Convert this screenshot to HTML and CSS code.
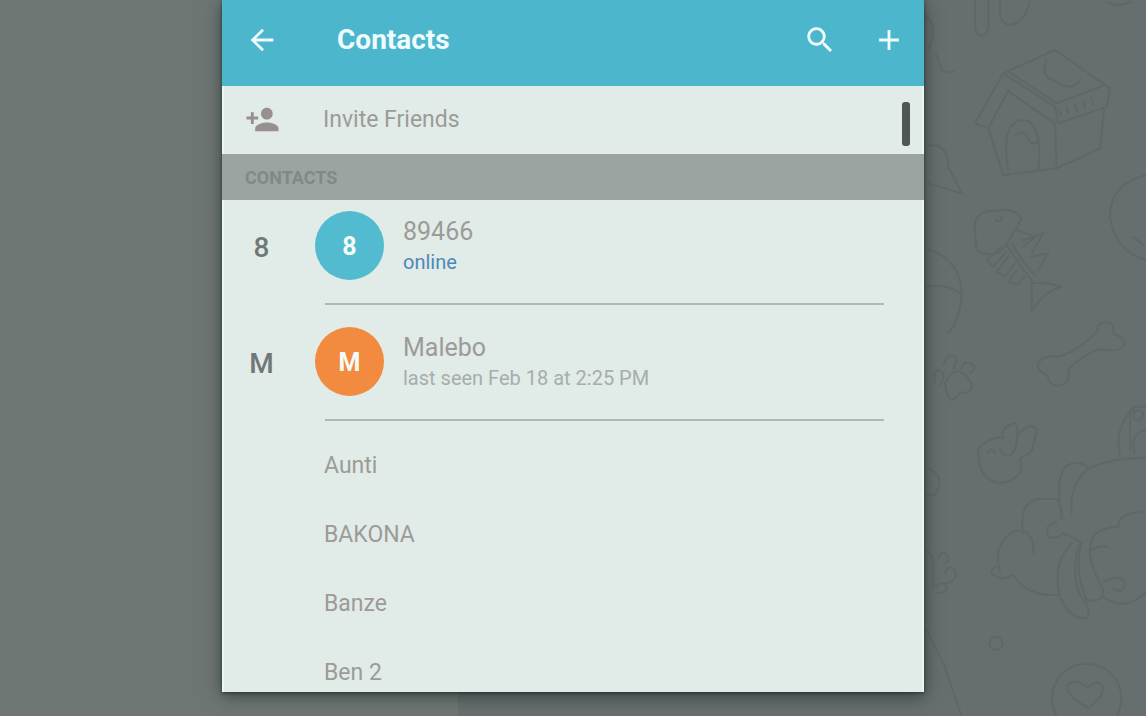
FILE: index.html
```html
<!DOCTYPE html>
<html lang="en">
<head>
    <meta charset="UTF-8">
    <meta name="viewport" content="width=device-width, initial-scale=1.0">
    <title>Contacts</title>
    <link rel="stylesheet" href="styles.css">
</head>
<body>
    <div class="backdrop" aria-hidden="true">
        <div class="chat-list"></div>
        <div class="wallpaper">
            <svg class="doodles" viewBox="0 0 678 2148">
                <!-- top edge -->
                <path d="M165 0V85q8 30 30 18q15-10 10-40V0M240 0v50q20 40 55 15q25-20 35-60M565 8q30 15 70-4"/>
                <path d="M20 50q30 30 15 70l-10 30M50 165l15 45q15 12 35 3"/>
                <!-- dog house -->
                <path d="M250 220l155-70 165 115-10 55-145 50-10-50zM250 220l-85 150 40 15 60-115M265 215l145 95 145-55M260 270l145 100M405 370l5 135M205 385l45 140 160-20 130-60 12-120M265 510q-25-140 40-150q65 0 50 150M285 405q30-20 40 15q20 20 30 0"/>
                <path d="M380 180q-20 50 20 60q60 40 80 0M415 325l8 20M440 322l5 18M465 315l5 18M490 305l5 20M515 295l5 20"/>
                <!-- party hat, ball -->
                <path d="M20 440q60-20 65 60l40 80-100-30M678 525q-110 30-108 125q15 105 108 130M640 710l30 25"/>
                <!-- fish bones -->
                <path d="M165 700q-10-70 60-68q65-10 80 25l-45 75q-30 50-90 20zM225 660q20 10 20-10"/>
                <path d="M260 735q35 55 75 105M275 730q30 55 70 95M290 690l55 20-35 30M310 720l60-20 -35 60M335 770l50-10 -30 50M245 740l-45 40 20 20 40-45M265 770l-35 45 25 15 30-40M290 810l-25 35 25 10 25-25M335 850v85q10-15 20-30q30-35 70-45q-45-15-90-10"/>
                <path d="M20 745q95 30 105 125q0 80-40 130M20 860q60-10 100 20"/>
                <!-- bone -->
                <path d="M420 1070q65-25 110-75q5-35 40-27q15 10 10 35q40 10 30 35q-15 20-75 10q-50 20-90 60q10 40-30 50q-35-5-30-30q-40-20-30-40q15-25 65-18z"/>
                <!-- paws -->
                <path d="M75 1150q30-60 65-20q40 45-20 50l-20 20q-20 0-25-50zM45 1150q-10-40 15-40q20 15 0 45M70 1095q10-35 35-25q10 15-5 35M125 1105q10-30 35-10q10 10-10 25"/>
                <path d="M175 1345q40-40 75-30q-15-30 35-47q15 20 0 80q-20 40-45 0M295 1300q50-40 55-5l-15 60-35 20q20 60-60 75q-70-10-65-105M205 1360q10-25 20 0"/>
                <path d="M20 1405q60 20 25 80h-25M20 1650l20 25v90M55 1675q10-30 25-10t-10 25M75 1720q10-30 30-10q10 30-25 40M50 1760q20-20 30 0q0 20-30 20"/>
                <!-- puppy -->
                <path d="M600 1370q-20-90 45-150h33M630 1350V1230M640 1240q15-20 30 0q-5 30-30 15zM678 1290q-50 10-35 70"/>
                <path d="M500 1410q70-40 178-35M455 1540q-10-80 50-135q-25-30-70-5q-25 40-15 100M310 1600q-15-85 40-103h60q15 20 15 60M340 1660q5-80-60-65q-65 40-40 120M240 1695q-50 20 0 40q20 0 40-10q40 65 135 60M410 1565q-40 10-25 45q20 10 45-10q40 15 55 30M455 1630q-60 60-35 160q30 70 80 65q20-20-20-70q-30-80 0-155M485 1630q-25 80 15 170q50 10 50-30q-55-100-35-150q10-35 80-40q0-45 83-45M550 1745q60-30 65 10q-10 30-35 10M550 1790q65 50 128-15M515 1650q20-15 50-10"/>
                <circle cx="228" cy="1930" r="20"/>
                <path d="M20 1890l50 100 55 158"/>
                <!-- heart badge -->
                <circle cx="500" cy="2095" r="104"/>
                <path d="M505 2125q-70-40-62-70q25-25 60 10q25-30 45-8q5 35-43 68z"/>
            </svg>
        </div>
    </div>

    <main class="dialog">
        <header class="dialog-header">
            <button class="icon-btn" type="button" aria-label="Back">
                <svg width="34" height="34" viewBox="0 0 24 24"><path d="M20 11H7.800l5.600-5.600L12 4l-8 8 8 8 1.400-1.400L7.800 13H20z"/></svg>
            </button>
            <h1>Contacts</h1>
            <button class="icon-btn" type="button" aria-label="Search">
                <svg width="34" height="34" viewBox="0 0 24 24"><path d="M15.500 14h-.79l-.28-.27A6.500 6.500 0 1 0 13.730 14.430l.27.28v.79l5 4.990L20.490 19zM9.500 14a4.500 4.500 0 1 1 0-9 4.500 4.500 0 0 1 0 9z"/></svg>
            </button>
            <button class="icon-btn" type="button" aria-label="Add contact">
                <svg width="34" height="34" viewBox="0 0 24 24"><path d="M19 13h-6v6h-2v-6H5v-2h6V5h2v6h6z"/></svg>
            </button>
        </header>

        <div class="dialog-body">
            <button class="invite" type="button">
                <svg width="35" height="35" viewBox="0 0 24 24"><path d="M15 12c2.210 0 4-1.790 4-4s-1.790-4-4-4-4 1.790-4 4 1.790 4 4 4zm-9-2V7H4v3H1v2h3v3h2v-3h3v-2H6zm9 4c-2.670 0-8 1.340-8 4v2h16v-2c0-2.660-5.330-4-8-4z"/></svg>
                <span>Invite Friends</span>
            </button>

            <h2>CONTACTS</h2>

            <ul class="contacts">
                <li class="contact">
                    <span class="letter">8</span>
                    <span class="avatar avatar-blue">8</span>
                    <div class="info">
                        <div class="name">89466</div>
                        <div class="status online">online</div>
                    </div>
                </li>
                <li class="contact">
                    <span class="letter">M</span>
                    <span class="avatar avatar-orange">M</span>
                    <div class="info">
                        <div class="name">Malebo</div>
                        <div class="status">last seen Feb 18 at 2:25 PM</div>
                    </div>
                </li>
            </ul>

            <ul class="phonebook">
                <li>Aunti</li>
                <li>BAKONA</li>
                <li>Banze</li>
                <li>Ben 2</li>
            </ul>
            <div class="scroll-thumb"></div>
        </div>
    </main>
</body>
</html>
```
FILE: styles.css
```css
* {
    box-sizing: border-box;
}
body {
    margin: 0;
    height: 100vh;
    overflow: hidden;
    font-family: Roboto, "Liberation Sans", sans-serif;
    color: #9c9b97;
    background: #6e7674;
}
h1, h2, ul {
    margin: 0;
    padding: 0;
    list-style: none;
}
button {
    border: none;
    padding: 0;
    background: none;
    color: inherit;
    font: inherit;
    cursor: pointer;
}
svg {
    display: block;
    fill: currentColor;
}

/* dimmed chat window behind the dialog */
.backdrop {
    position: absolute;
    inset: 0;
    display: flex;
}
.chat-list {
    width: 40%;
    background: #6e7674;
}
.wallpaper {
    flex: 1;
    display: flex;
    justify-content: flex-end;
    background: #666e6f;
    overflow: hidden;
}
.doodles {
    width: 226px;
    height: 716px;
    flex-shrink: 0;
    fill: none;
    stroke: #5f6769;
    stroke-width: 6;
    stroke-linejoin: round;
    stroke-linecap: round;
}

.dialog {
    position: relative;
    display: flex;
    flex-direction: column;
    max-width: 702px;
    height: calc(100vh - 24px);
    margin: 0 auto;
    background: #e1ebe8;
    box-shadow: 0 4px 16px rgba(20, 35, 30, 0.6), 0 1px 3px rgba(20, 35, 30, 0.6);
    overflow: hidden;
}
.dialog-header {
    display: flex;
    align-items: center;
    flex-shrink: 0;
    height: 86px;
    padding: 0 18px 6px 23px;
    background: #4cb6cd;
    color: #effcfd;
}
.icon-btn {
    display: flex;
    margin-right: 35px;
}
.icon-btn:last-child {
    margin-right: 0;
}
h1 {
    flex: 1;
    margin-left: 23px;
    font-size: 28px;
    font-weight: 700;
    line-height: 32px;
}

.dialog-body {
    position: relative;
    flex: 1;
    overflow: hidden;
    box-shadow: inset 2px 0 #eaf8f3, inset -2px 0 #eaf8f3;
}
.invite {
    display: flex;
    align-items: center;
    width: 100%;
    height: 68px;
    padding: 0 23px 2px;
    font-size: 23px;
    text-align: left;
}
.invite svg {
    margin-right: 43px;
    color: #988f8f;
}
h2 {
    padding: 2px 23px 0;
    background: #9ca4a2;
    color: #818987;
    font-size: 18px;
    font-weight: 700;
    line-height: 44px;
}

.contacts {
    margin-top: -11px;
}
.contact {
    display: grid;
    grid-template-columns: 80px 69px 1fr;
    align-items: center;
    height: 116px;
    padding: 0 13px 4px;
    position: relative;
}
.contact::after {
    content: "";
    position: absolute;
    left: 103px;
    right: 40px;
    bottom: 0;
    height: 2px;
    background: #afb8b5;
}
.letter {
    width: 53px;
    padding-top: 4px;
    color: #707775;
    font-size: 28px;
    font-weight: 500;
    text-align: center;
}
.avatar {
    height: 69px;
    border-radius: 50%;
    color: #f4fbf6;
    font-size: 25px;
    font-weight: 700;
    line-height: 71px;
    text-align: center;
}
.avatar-blue {
    background: #53bbd0;
}
.avatar-orange {
    background: #f28a40;
}
.info {
    padding: 4px 0 0 19px;
}
.name {
    font-size: 25px;
    line-height: 30px;
}
.status {
    color: #a5aeab;
    font-size: 20px;
    line-height: 30px;
}
.status.online {
    color: #4a89b9;
}

.phonebook {
    padding: 10px 102px 0;
    font-size: 23px;
    line-height: 69px;
}
.scroll-thumb {
    position: absolute;
    top: 16px;
    right: 14px;
    width: 8px;
    height: 44px;
    border-radius: 3px;
    background: #4f5755;
}
```
